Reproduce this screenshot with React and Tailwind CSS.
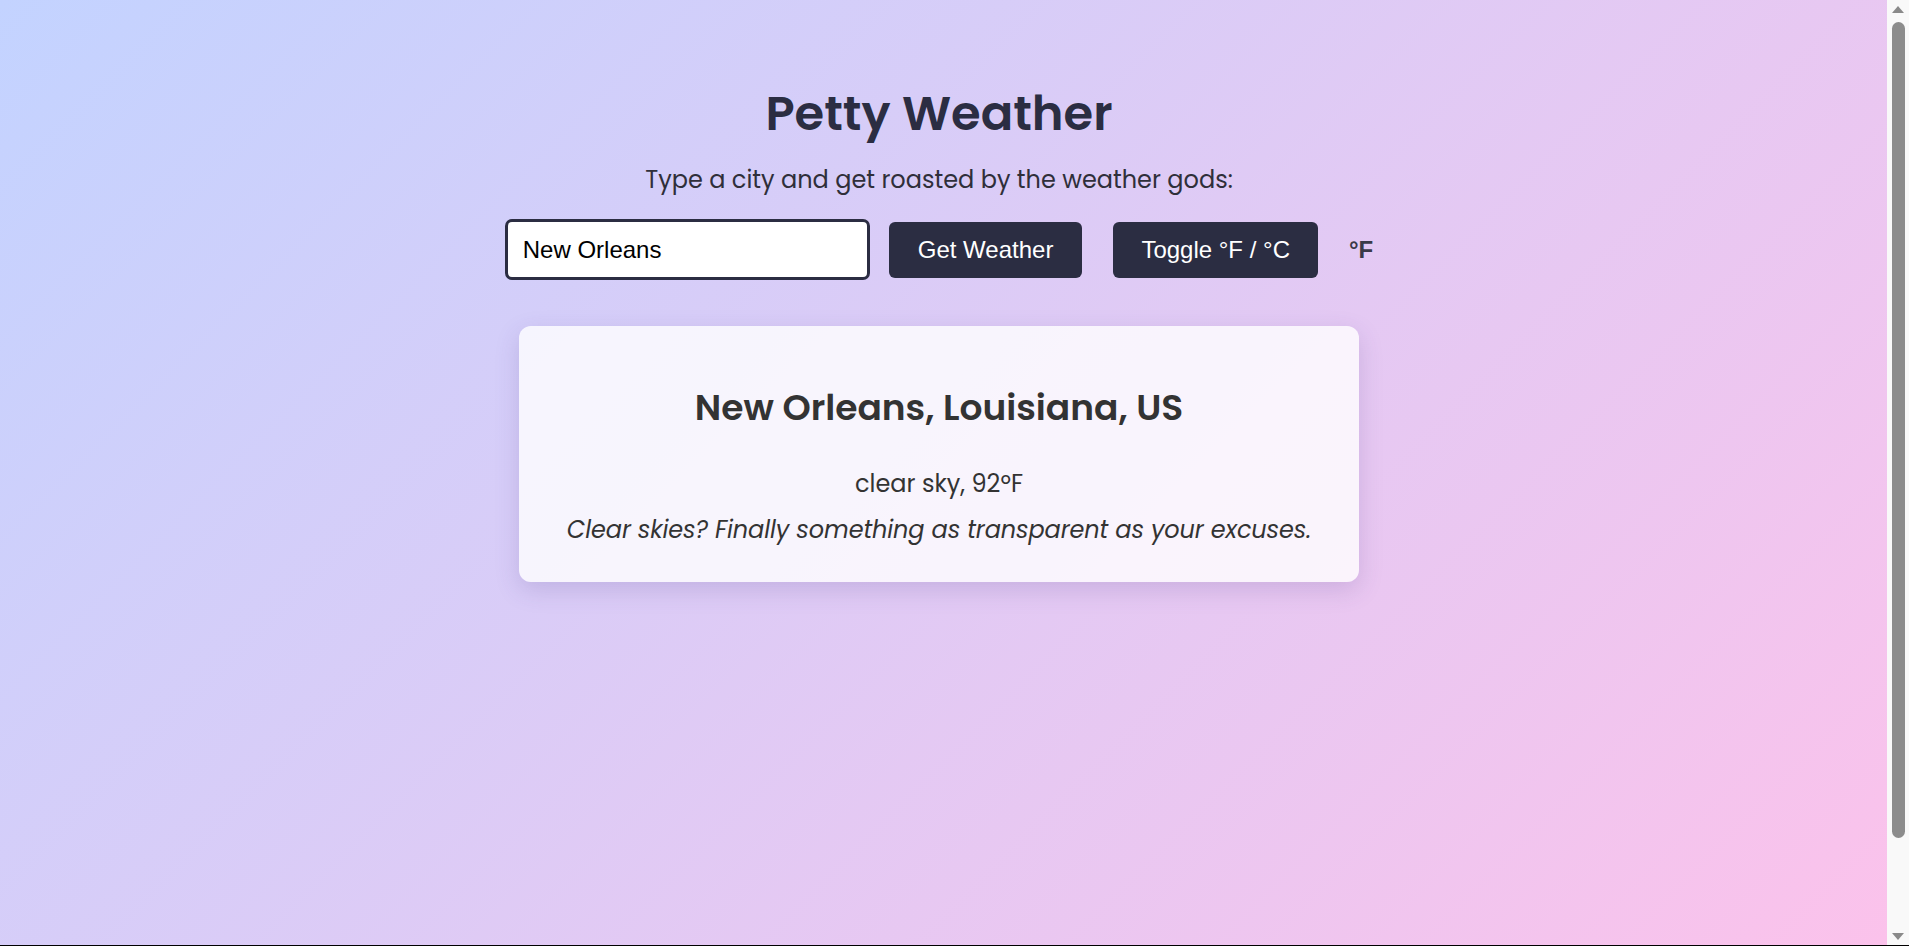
function ScrollArrow({ down }) {
  return (
    <svg width="12" height="7" viewBox="0 0 12 7" className="block">
      <path d={down ? 'M0 0 H12 L6 7 Z' : 'M0 7 H12 L6 0 Z'} fill="#8a8a8a" />
    </svg>
  )
}

export default function App() {
  return (
    <div className="flex h-screen overflow-hidden border-b border-black">
      {/* ── Page ── */}
      <main className="flex-1 bg-[linear-gradient(135deg,#c3d3ff_0%,#fbc2eb_100%)] pt-[50px] pr-[9px] font-['Poppins','Inter',sans-serif]">
        <h1 className="mt-[40px] text-center text-[48px] leading-none font-semibold text-[#2b2d42]">
          Petty Weather
        </h1>
        <p className="mt-[27px] text-center text-[24px] leading-[30px] text-[#2f2f3a]">
          Type a city and get roasted by the weather gods:
        </p>

        {/* ── Search row ── */}
        <div className="mt-[24px] flex items-center justify-center font-['Liberation_Sans',Arial,sans-serif]">
          <input
            type="text"
            defaultValue="New Orleans"
            className="w-[365px] h-[61px] pl-[15px] pr-[16px] rounded-[7px] border-[3px] border-[#2b2d42] bg-white text-[24px] text-black outline-none"
          />
          <button className="ml-[19px] h-[56px] px-[29px] rounded-[6px] bg-[#2b2d42] text-[24px] text-white">
            Get Weather
          </button>
          <button className="ml-[31px] h-[56px] px-[28px] rounded-[6px] bg-[#2b2d42] text-[24px] text-white">
            Toggle °F / °C
          </button>
          <span className="ml-[31px] text-[24px] font-bold text-[#3a3a48]">°F</span>
        </div>

        {/* ── Result card ── */}
        <div className="mx-auto mt-[46px] w-[840px] rounded-[12px] bg-white/80 px-[40px] pt-[60px] pb-[36px] text-center text-[#333] shadow-[0_8px_24px_rgba(80,60,140,0.18)]">
          <h2 className="text-[36px] leading-[44px] font-semibold">New Orleans, Louisiana, US</h2>
          <p className="mt-[38px] text-[24px] leading-[32px]">clear sky, 92ºF</p>
          <p className="mt-[14px] text-[24px] leading-[32px] italic tracking-[-0.1px]">
            Clear skies? Finally something as transparent as your excuses.
          </p>
        </div>
      </main>

      {/* ── Scrollbar ── */}
      <div className="flex w-[22px] flex-col bg-[#f9f9f9]">
        <div className="flex h-[18px] items-center justify-center">
          <ScrollArrow />
        </div>
        <div className="mt-[4px] ml-[5px] h-[816px] w-[13px] rounded-full bg-[#8c8c8c]" />
        <div className="flex-1" />
        <div className="flex h-[18px] items-center justify-center">
          <ScrollArrow down />
        </div>
      </div>
    </div>
  )
}
